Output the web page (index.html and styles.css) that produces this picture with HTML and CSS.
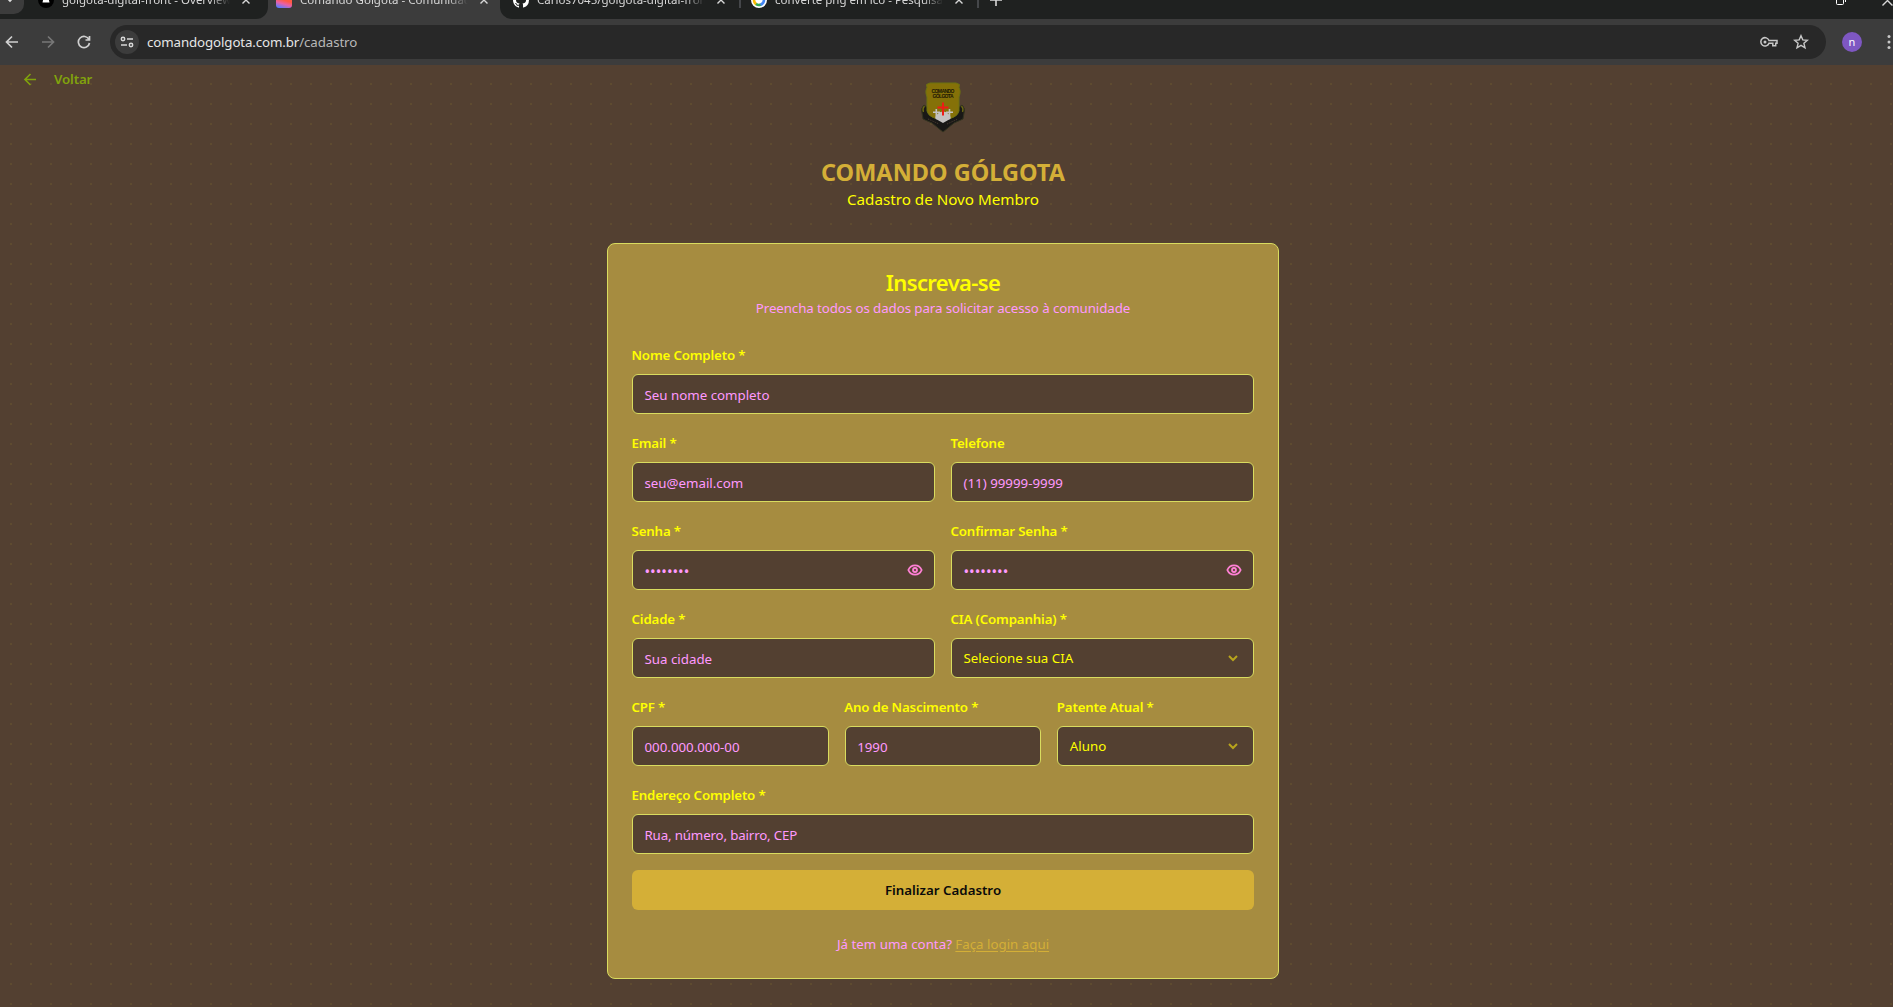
FILE: index.html
```html
<!DOCTYPE html>
<html lang="pt-BR">
<head>
<meta charset="utf-8">
<title>Comando Gólgota - Comunidade</title>
<link rel="stylesheet" href="styles.css">
</head>
<body>
<div class="browser">
  <div class="tabstrip">
    <div class="strip-part strip-left">
      <div class="tab-search"><svg width="10" height="6" viewBox="0 0 10 6"><path d="M1 0l4 4 4-4" /></svg></div>
      <svg class="favicon" width="16" height="16" viewBox="0 0 16 16"><circle cx="8" cy="8" r="8" fill="#000"/><path d="M6 4h4l1.500 6.500h-7z" fill="#fff"/></svg>
      <span class="tab-title">golgota-digital-front - Overview</span>
      <svg class="close" width="8" height="8" viewBox="0 0 8 8"><path d="M.5.5l7 7M7.5.5l-7 7"/></svg>
    </div>
    <div class="tab-active">
      <svg class="favicon" width="16" height="16" viewBox="0 0 16 16"><defs><linearGradient id="fav" x1="0.6" y1="0" x2="0.3" y2="1"><stop offset="0.5" stop-color="#ff5a45"/><stop offset="0.72" stop-color="#e860a8"/><stop offset="1" stop-color="#5b7cff"/></linearGradient></defs><rect width="16" height="16" rx="3" fill="url(#fav)"/></svg>
      <span class="tab-title">Comando Gólgota - Comunidade</span>
      <svg class="close" width="8" height="8" viewBox="0 0 8 8"><path d="M.5.5l7 7M7.5.5l-7 7"/></svg>
    </div>
    <div class="strip-part strip-right">
      <svg class="favicon" width="16" height="16" viewBox="0 0 16 16"><path fill="#fff" d="M8 0C3.58 0 0 3.58 0 8c0 3.54 2.29 6.53 5.47 7.59.4.07.55-.17.55-.38v-1.49c-2.01.37-2.53-.49-2.69-.94-.09-.23-.48-.94-.82-1.13-.28-.15-.68-.52-.01-.53.63-.01 1.08.58 1.23.82.72 1.21 1.87.87 2.33.66.07-.52.28-.87.51-1.07-1.78-.2-3.64-.89-3.64-3.95 0-.87.31-1.59.82-2.15-.08-.2-.36-1.02.08-2.12 0 0 .67-.21 2.2.82a7.4 7.4 0 014 0c1.53-1.04 2.2-.82 2.2-.82.44 1.1.16 1.92.08 2.12.51.56.82 1.27.82 2.15 0 3.07-1.87 3.75-3.65 3.95.29.25.54.73.54 1.48v2.2c0 .21.15.46.55.38A8 8 0 0016 8c0-4.42-3.58-8-8-8z"/></svg>
      <span class="tab-title">Carlos7045/golgota-digital-front</span>
      <svg class="close" width="8" height="8" viewBox="0 0 8 8"><path d="M.5.5l7 7M7.5.5l-7 7"/></svg>
      <i class="divider"></i>
      <svg class="favicon second" width="16" height="16" viewBox="0 0 16 16"><circle cx="8" cy="8" r="8" fill="#fff"/><g fill="none" stroke-width="2.600"><path d="M3 8a5 5 0 002.500 4.300" stroke="#fbbc04"/><path d="M5 12a5 5 0 005 .5" stroke="#34a853"/><path d="M9.500 12.700A5 5 0 0013 8" stroke="#4285f4"/></g></svg>
      <span class="tab-title">converte png em ico - Pesquisa</span>
      <svg class="close" width="8" height="8" viewBox="0 0 8 8"><path d="M.5.5l7 7M7.500.5l-7 7"/></svg>
      <i class="divider"></i>
      <svg class="plus" width="12" height="12" viewBox="0 0 12 12"><path d="M6 0v12M0 6h12"/></svg>
      <svg class="restore" width="11" height="12" viewBox="0 0 11 12"><rect x=".5" y="2.500" width="7" height="8" rx="1"/><path d="M3 .5h5a1.500 1.500 0 011.500 1.500v6"/></svg>
      <svg class="win-close" width="11" height="11" viewBox="0 0 11 11"><path d="M.5.5l10 10M10.500.5l-10 10"/></svg>
    </div>
  </div>
  <div class="toolbar">
    <svg class="nav" width="14" height="14" viewBox="0 0 14 14"><path d="M13 7H2M7 1.500L1.500 7 7 12.500"/></svg>
    <svg class="nav dim" width="14" height="14" viewBox="0 0 14 14"><path d="M1 7h11M7 1.500L12.500 7 7 12.500"/></svg>
    <svg class="nav reload" width="14" height="14" viewBox="0 0 14 14"><path d="M12 4.500A5.600 5.600 0 1012.500 8M12.500 1v4H8.500"/></svg>
    <div class="omnibox">
      <span class="site-info"><svg width="14" height="12" viewBox="0 0 14 12"><circle cx="3" cy="3" r="1.700"/><path d="M7 3h6M1 9h6"/><circle cx="11" cy="9" r="1.700"/></svg></span>
      <span class="url">comandogolgota.com.br<span class="path">/cadastro</span></span>
      <svg class="key" width="18" height="12" viewBox="0 0 18 12"><path d="M9 4.500h8v2.700h-1.300v2.600h-2.900V7.200H9A4.200 4.200 0 119 4.500z"/><circle cx="5" cy="6" r="1.500" class="solid"/></svg>
      <svg class="star" width="16" height="16" viewBox="0 0 16 16"><path d="M8 1.700l1.800 4.200 4.600.4-3.500 3 1.100 4.500L8 11.400l-4 2.400 1.100-4.500-3.500-3 4.600-.4z"/></svg>
    </div>
    <span class="avatar">n</span>
    <svg class="menu" width="4" height="16" viewBox="0 0 4 16"><circle cx="2" cy="2.500" r="1.500"/><circle cx="2" cy="8" r="1.500"/><circle cx="2" cy="13.500" r="1.500"/></svg>
  </div>
</div>

<main class="page">
  <a class="back"><svg width="19" height="19" viewBox="0 0 24 24"><path d="M12 19l-7-7 7-7M19 12H5"/></svg><span>Voltar</span></a>
  <header class="hero">
    <svg class="crest" width="64" height="64" viewBox="0 0 64 64">
      <path d="M13 30q-4 4-2 8l1 6 9 4 11 9 11-9 9-4 1-6q2-4-2-8l-4 3H17z" fill="#191816" stroke="#33331f"/>
      <path d="M13.500 31q-2.500 3-1 6M50.500 31q2.500 3 1 6" fill="none" stroke="#6b6713" stroke-width="1.300"/>
      <path d="M19 8h26l3.500 1.500-.5 3q1.500 3 1 6L48 22v14q-1 4-5 6l-11 6-11-6q-4-2-5-6V22l-1-3.500q-.5-3 1-6l-.5-3z" fill="#857108" stroke="#6c7211"/>
      <path d="M24.500 47v-5q2-5 7.500-5.500 5.500.5 7.500 5.500v5L32 50z" fill="#c4c2c0"/>
      <path d="M25.300 34v9M22 37.300h7M38.500 34v9M35 37.300h7" stroke="#c4c2c0" stroke-width="1.600"/>
      <path d="M32 27.500v13M26.500 32.500h11" stroke="#ee1c16" stroke-width="2"/>
      <path d="M13 41q10 1 19 7 9-6 19-7l-1 3-7 3-11 9-11-9-7-3z" fill="#191816"/>
      <path d="M17 44l11 5M36 49l11-5" stroke="#4b3d31" stroke-dasharray="1 1"/>
      <text x="32" y="18" textLength="23" class="crest-text">COMANDO</text>
      <text x="32" y="23.300" textLength="21" class="crest-text">GÓLGOTA</text>
    </svg>
    <h1>COMANDO GÓLGOTA</h1>
    <p>Cadastro de Novo Membro</p>
  </header>

  <section class="card">
    <h2>Inscreva-se</h2>
    <p class="desc">Preencha todos os dados para solicitar acesso à comunidade</p>
    <form class="form">
      <div class="row">
        <div class="field"><label>Nome Completo *</label><div class="control ph"><span>Seu nome completo</span></div></div>
      </div>
      <div class="row">
        <div class="field"><label>Email *</label><div class="control ph"><span>seu@email.com</span></div></div>
        <div class="field"><label>Telefone</label><div class="control ph"><span>(11) 99999-9999</span></div></div>
      </div>
      <div class="row">
        <div class="field"><label>Senha *</label><div class="control ph"><span class="dots">••••••••</span><svg class="eye" width="16" height="16" viewBox="0 0 24 24"><path d="M2 12s3-7 10-7 10 7 10 7-3 7-10 7-10-7-10-7z"/><circle cx="12" cy="12" r="3"/></svg></div></div>
        <div class="field"><label>Confirmar Senha *</label><div class="control ph"><span class="dots">••••••••</span><svg class="eye" width="16" height="16" viewBox="0 0 24 24"><path d="M2 12s3-7 10-7 10 7 10 7-3 7-10 7-10-7-10-7z"/><circle cx="12" cy="12" r="3"/></svg></div></div>
      </div>
      <div class="row">
        <div class="field"><label>Cidade *</label><div class="control ph"><span>Sua cidade</span></div></div>
        <div class="field"><label>CIA (Companhia) *</label><div class="control select"><span>Selecione sua CIA</span><svg class="chevron" width="16" height="16" viewBox="0 0 24 24"><path d="M6 9l6 6 6-6"/></svg></div></div>
      </div>
      <div class="row">
        <div class="field"><label>CPF *</label><div class="control ph"><span>000.000.000-00</span></div></div>
        <div class="field"><label>Ano de Nascimento *</label><div class="control ph"><span>1990</span></div></div>
        <div class="field"><label>Patente Atual *</label><div class="control select"><span>Aluno</span><svg class="chevron" width="16" height="16" viewBox="0 0 24 24"><path d="M6 9l6 6 6-6"/></svg></div></div>
      </div>
      <div class="row">
        <div class="field"><label>Endereço Completo *</label><div class="control ph"><span class="address">Rua, número, bairro, CEP</span></div></div>
      </div>
      <button class="submit" type="button">Finalizar Cadastro</button>
    </form>
    <p class="login">Já tem uma conta? <a>Faça login aqui</a></p>
  </section>
</main>
</body>
</html>
```
FILE: styles.css
```css
* { box-sizing: border-box; }
body {
  margin: 0;
  height: 1007px;
  overflow: hidden;
  display: flex;
  flex-direction: column;
  background: #534031;
  font-family: "Noto Sans", "Open Sans", sans-serif;
  font-size: 13.300px;
}
h1, h2, p { margin: 0; }
svg { display: block; flex: none; fill: none; }

/* Browser chrome */
.browser { height: 65px; flex: none; background: #3c3c3c; overflow: hidden; }
.tabstrip { display: flex; height: 34px; margin-top: -15px; background: #3c3c3c; }
.strip-part, .tab-active { display: flex; align-items: center; height: 34px; padding-bottom: 4px; }
.strip-part { background: #1f2120; }
.strip-left { width: 268px; border-bottom-right-radius: 12px; }
.tab-active { width: 232px; padding-left: 8px; }
.strip-right { flex: 1; border-bottom-left-radius: 12px; padding-left: 13px; }
.tab-search { width: 24px; height: 28px; margin-right: 14px; background: #3c3c3c; border-radius: 0 0 10px 0; display: flex; align-items: center; padding-left: 5px; }
.tab-search path { stroke: #ddd; stroke-width: 1.600; }
.favicon { margin-right: 8px; }
.favicon.second { margin-left: 10px; }
.tab-title {
  width: 168px; overflow: hidden; white-space: nowrap;
  font-size: 11.500px; line-height: 16px; color: #d8d8d8;
  -webkit-mask-image: linear-gradient(90deg, #000 148px, transparent 168px);
  mask-image: linear-gradient(90deg, #000 148px, transparent 168px);
}
.close { margin-left: 12px; }
.close path, .win-close path { stroke: #d8d8d8; stroke-width: 1.400; }
.divider { width: 2px; height: 16px; margin-left: 14px; background: #45474a; }
.plus { margin-left: 11px; }
.plus path { stroke: #d8d8d8; stroke-width: 1.600; }
.restore { margin-left: auto; stroke: #fff; }
.win-close { margin: 0 0 0 35px; }
.toolbar { display: flex; align-items: center; height: 46px; padding: 0 2px 0 5px; }
.nav { margin-right: 22px; stroke: #d0d0d0; stroke-width: 1.700; }
.nav.dim { stroke: #777; }
.nav.reload { margin-right: 19px; }
.omnibox { flex: 1; height: 34px; border-radius: 17px; background: #282828; display: flex; align-items: center; padding: 0 17px 0 5px; }
.site-info { width: 24px; height: 24px; border-radius: 50%; background: #3c3c3c; display: grid; place-items: center; margin-right: 8px; }
.site-info svg { stroke: #d8d8d8; stroke-width: 1.500; }
.url { flex: 1; color: #e6e6e6; letter-spacing: -0.110px; }
.path { color: #b8b8b8; }
.key { stroke: #c8c8c8; stroke-width: 1.500; margin-right: 15px; }
.key .solid { fill: #c8c8c8; stroke: none; }
.star { stroke: #c8c8c8; stroke-width: 1.400; }
.avatar { width: 20px; height: 20px; margin: 0 25px 0 16px; border-radius: 50%; background: #7e57c2; color: #fff; font-size: 11px; line-height: 19px; text-align: center; }
.menu { fill: #c8c8c8; }

/* Page */
.page {
  flex: 1;
  position: relative;
  padding: 10px 7px 0 0;
  background-image: radial-gradient(circle at 11px 11px, #5e4b30 1px, transparent 1px);
  background-size: 20px 20px;
  background-position: 0 8px;
}
.back { position: absolute; left: 21px; top: 6px; display: flex; align-items: center; gap: 14px; color: #81a30c; font-weight: 600; line-height: 16px; letter-spacing: -0.150px; }
.back svg { stroke: currentColor; stroke-width: 2; margin: -2px 0; }
.hero { display: flex; flex-direction: column; align-items: center; }
.crest { margin-bottom: 16px; }
.crest-text { font: 700 5px "Liberation Sans", sans-serif; fill: #1b1605; text-anchor: middle; }
.hero h1 { font-size: 23.500px; line-height: 32px; padding-top: 1px; margin-bottom: -1px; font-weight: 700; color: #d4af37; }
.hero p { font-size: 15.200px; line-height: 24px; color: #ffff00; }

.card { width: 672px; height: 736px; margin: 32px auto 0; padding: 24px; border: 1px solid #d9dc5f; border-radius: 8px; background: #a68c40; text-align: center; }
.card h2 { font-size: 22px; line-height: 24px; padding-top: 2px; margin-bottom: -2px; font-weight: 600; letter-spacing: -0.600px; color: #ffff00; }
.desc { margin-top: 6px; line-height: 20px; letter-spacing: -0.080px; color: #ff99ff; }
.form { margin-top: 24px; display: flex; flex-direction: column; gap: 16px; text-align: left; }
.row { display: grid; grid-auto-flow: column; grid-auto-columns: 1fr; gap: 16px; }
.field { display: flex; flex-direction: column; gap: 8px; }
.field label { height: 24px; line-height: 26px; font-weight: 600; letter-spacing: -0.170px; margin-left: -0.500px; color: #ffff00; }
.control { display: flex; align-items: center; justify-content: space-between; height: 40px; padding: 0 11px 0 11.500px; border: 1px solid #d9dc5f; border-radius: 6px; background: #534031; line-height: 20px; }
.ph { color: #ff99ff; }
.ph span { padding-top: 2px; }
.ph .dots { font-size: 14.900px; }
.ph .address { letter-spacing: -0.150px; }
.select { color: #ffff00; }
.eye { stroke: #ff80d5; stroke-width: 2.700; }
.chevron { stroke: #b8a41c; stroke-width: 3; margin-right: 1px; }
.submit { height: 40px; border: 0; border-radius: 6px; background: #d4af37; color: #0a0a0a; font: inherit; font-weight: 600; }
.login { margin-top: 24px; line-height: 20px; color: #ff99ff; }
.login a { color: #d4af37; text-decoration: underline; text-underline-offset: 2px; }
```
